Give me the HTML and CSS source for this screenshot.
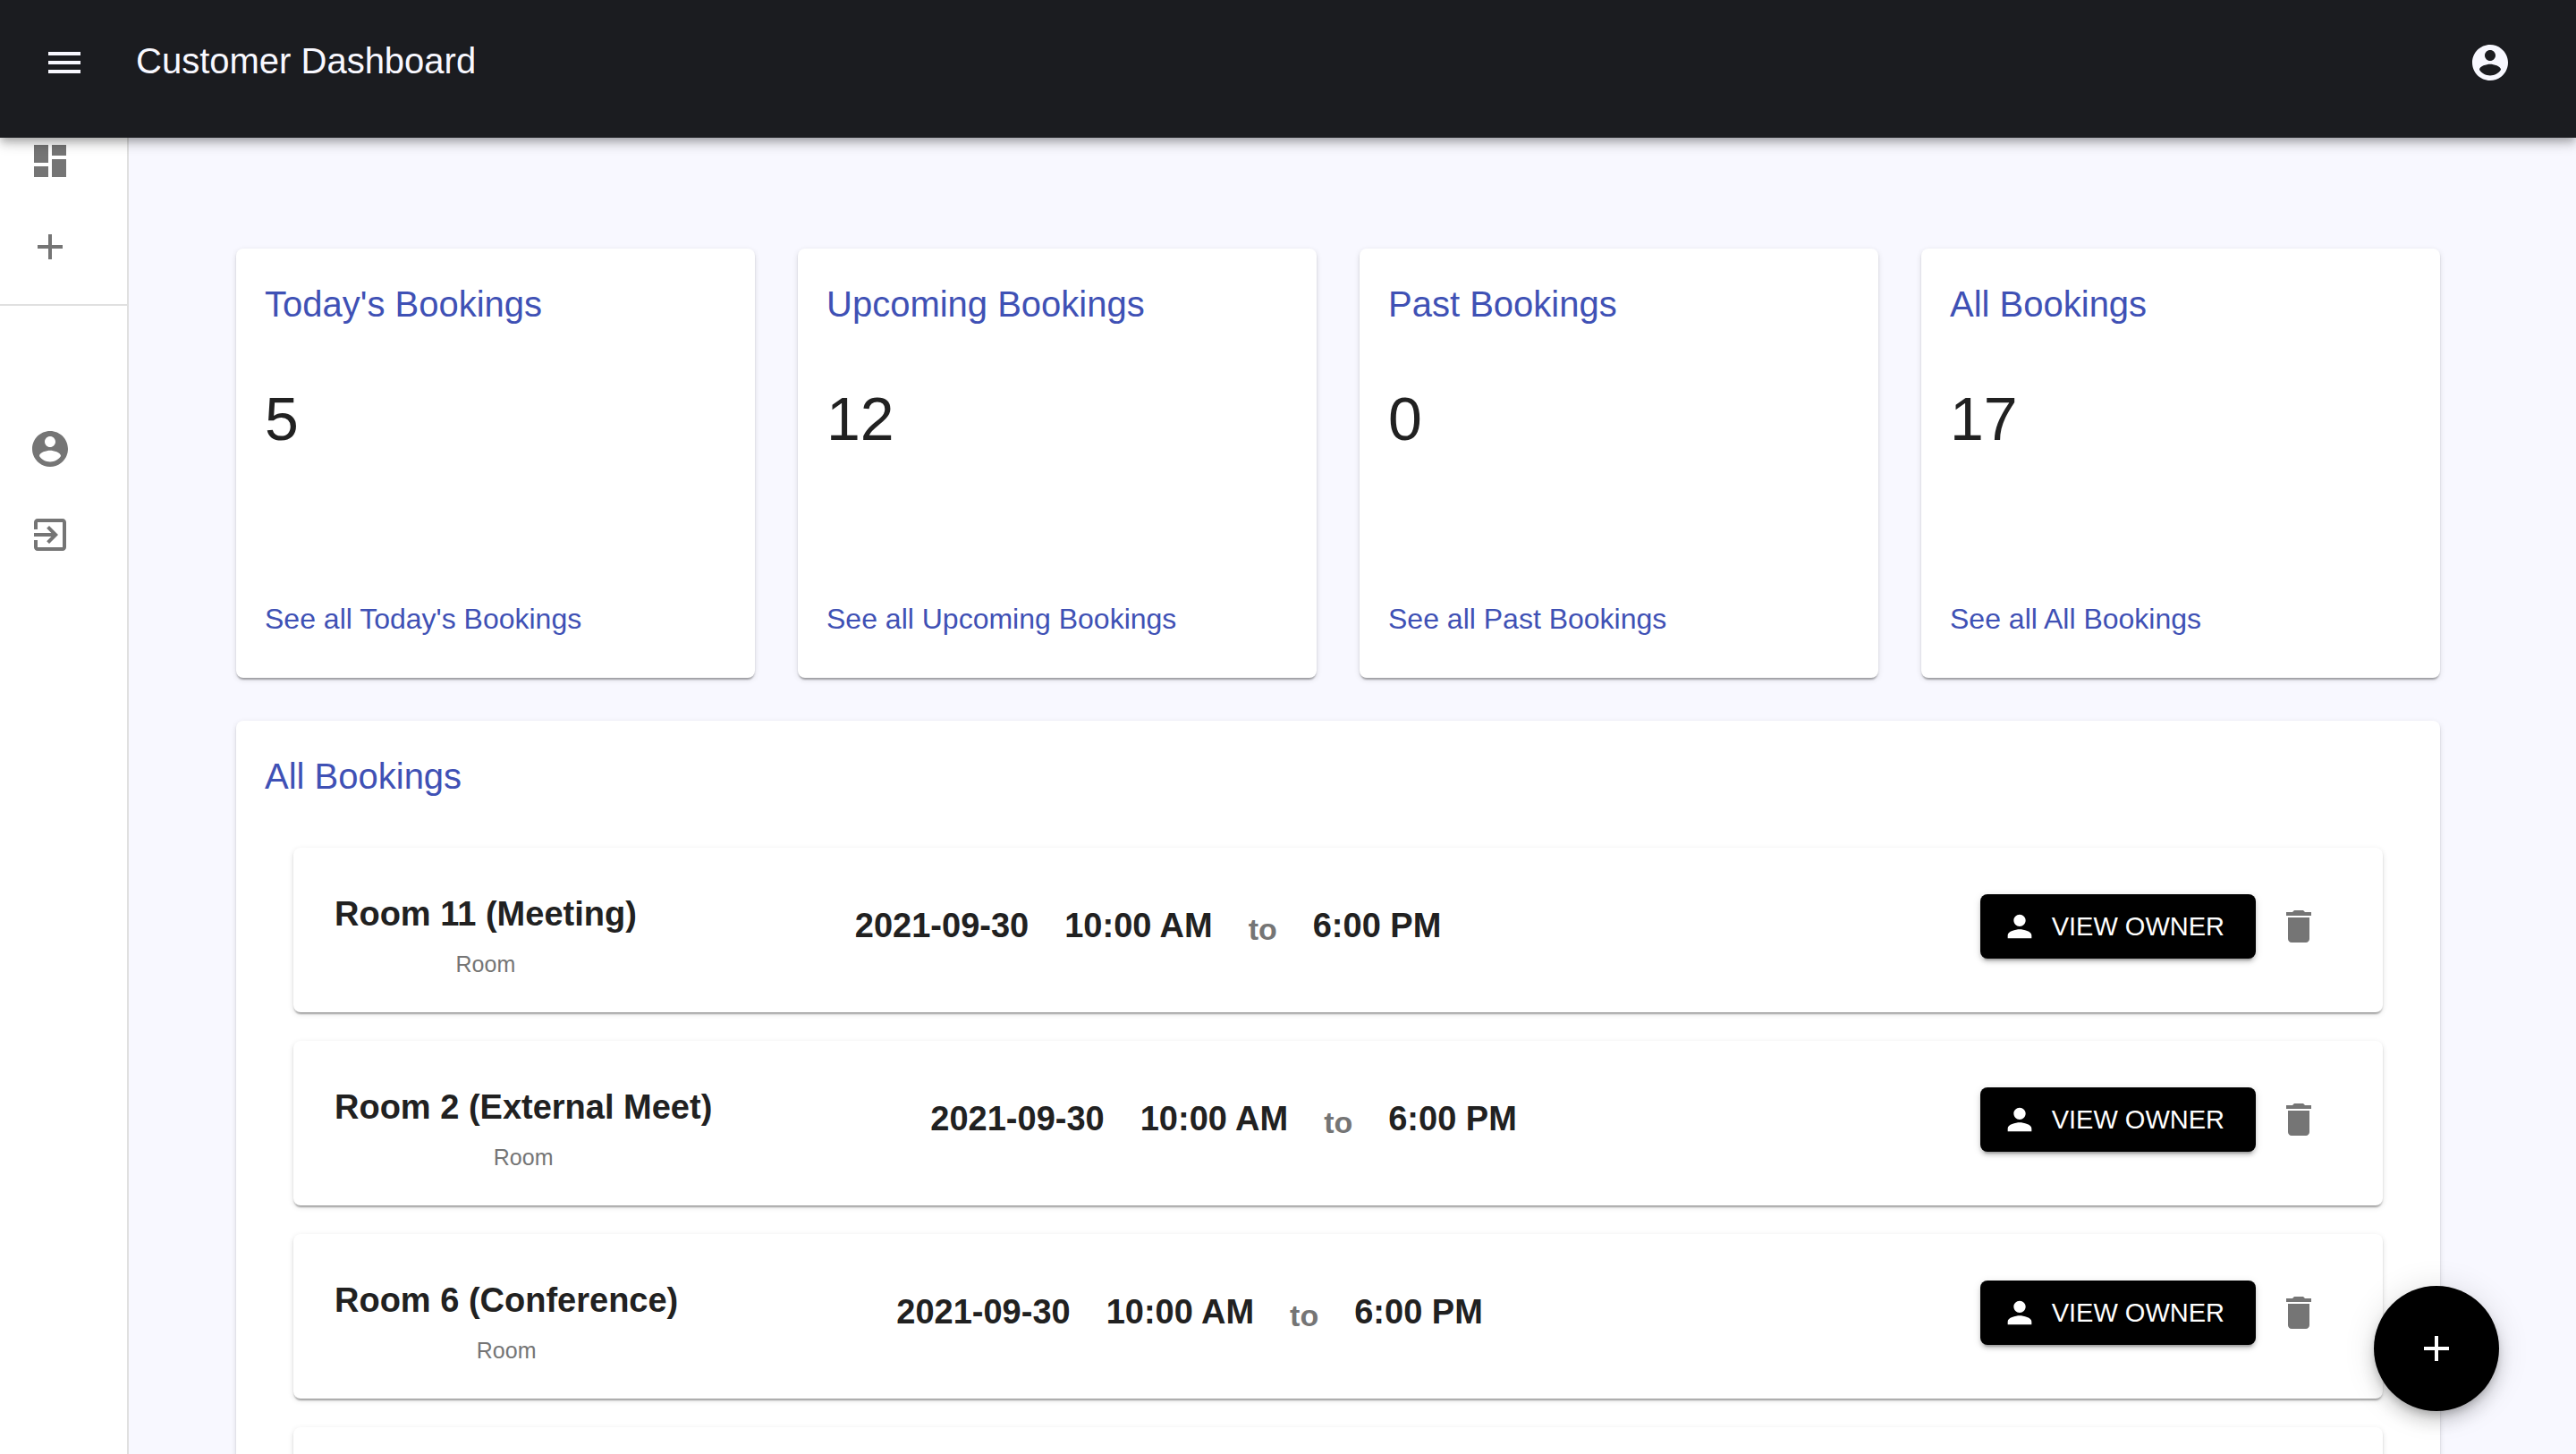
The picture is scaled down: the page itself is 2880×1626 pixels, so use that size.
FILE: index.html
```
<!DOCTYPE html>
<html lang="en">
<head>
<meta charset="utf-8">
<title>Customer Dashboard</title>
<link rel="stylesheet" href="styles.css">
</head>
<body>
<svg class="sprite" aria-hidden="true">
  <symbol id="menu" viewBox="0 0 24 24"><path d="M3 18h18v-2H3v2zm0-5h18v-2H3v2zm0-7v2h18V6H3z"/></symbol>
  <symbol id="account" viewBox="0 0 24 24"><path d="M12 2C6.48 2 2 6.48 2 12s4.480 10 10 10 10-4.480 10-10S17.520 2 12 2zm0 3c1.660 0 3 1.340 3 3s-1.340 3-3 3-3-1.340-3-3 1.340-3 3-3zm0 14.200c-2.500 0-4.710-1.280-6-3.220.030-1.990 4-3.080 6-3.080 1.990 0 5.970 1.090 6 3.080-1.290 1.940-3.500 3.220-6 3.220z"/></symbol>
  <symbol id="dashboard" viewBox="0 0 24 24"><path d="M3 13h8V3H3v10zm0 8h8v-6H3v6zm10 0h8V11h-8v10zm0-18v6h8V3h-8z"/></symbol>
  <symbol id="add" viewBox="0 0 24 24"><path d="M19 13h-6v6h-2v-6H5v-2h6V5h2v6h6v2z"/></symbol>
  <symbol id="exit" viewBox="0 0 24 24"><path d="M10.090 15.590L11.500 17l5-5-5-5-1.410 1.410L12.670 11H3v2h9.670l-2.580 2.590zM19 3H5c-1.110 0-2 .9-2 2v4h2V5h14v14H5v-4H3v4c0 1.100.890 2 2 2h14c1.100 0 2-.9 2-2V5c0-1.100-.9-2-2-2z"/></symbol>
  <symbol id="person" viewBox="0 0 24 24"><path d="M12 12c2.210 0 4-1.790 4-4s-1.790-4-4-4-4 1.790-4 4 1.790 4 4 4zm0 2c-2.670 0-8 1.340-8 4v2h16v-2c0-2.660-5.330-4-8-4z"/></symbol>
  <symbol id="delete" viewBox="0 0 24 24"><path d="M6 19c0 1.100.9 2 2 2h8c1.100 0 2-.9 2-2V7H6v12zM19 4h-3.500l-1-1h-5l-1 1H5v2h14V4z"/></symbol>
</svg>

<header class="app-bar">
  <button class="icon-button" type="button" aria-label="Open menu"><svg class="icon"><use href="#menu"/></svg></button>
  <h1 class="app-title">Customer Dashboard</h1>
  <button class="icon-button" type="button" aria-label="Account"><svg class="icon"><use href="#account"/></svg></button>
</header>

<div class="shell">
  <nav class="sidebar" aria-label="Main">
    <div class="nav-group">
      <a class="nav-item" href="#dashboard" aria-label="Dashboard"><svg class="icon"><use href="#dashboard"/></svg></a>
      <a class="nav-item" href="#add" aria-label="Add booking"><svg class="icon"><use href="#add"/></svg></a>
    </div>
    <div class="nav-group nav-group-user">
      <a class="nav-item" href="#account" aria-label="Profile"><svg class="icon"><use href="#account"/></svg></a>
      <a class="nav-item" href="#exit" aria-label="Log out"><svg class="icon"><use href="#exit"/></svg></a>
    </div>
  </nav>

  <main class="content">
    <div class="container">
      <section class="summary">
        <article class="paper card">
          <h2 class="heading">Today's Bookings</h2>
          <p class="count">5</p>
          <a class="more" href="#today">See all Today's Bookings</a>
        </article>
        <article class="paper card">
          <h2 class="heading">Upcoming Bookings</h2>
          <p class="count">12</p>
          <a class="more" href="#upcoming">See all Upcoming Bookings</a>
        </article>
        <article class="paper card">
          <h2 class="heading">Past Bookings</h2>
          <p class="count">0</p>
          <a class="more" href="#past">See all Past Bookings</a>
        </article>
        <article class="paper card">
          <h2 class="heading">All Bookings</h2>
          <p class="count">17</p>
          <a class="more" href="#all">See all All Bookings</a>
        </article>
      </section>

      <section class="paper panel">
        <h2 class="heading">All Bookings</h2>
        <ul class="bookings">
          <li class="paper booking">
            <div class="room"><h3 class="room-name">Room 11 (Meeting)</h3><p class="room-type">Room</p></div>
            <div class="slot"><span>2021-09-30</span><span>10:00 AM</span><span class="to">to</span><span>6:00 PM</span></div>
            <div class="actions">
              <button class="owner-button" type="button"><svg class="icon-small"><use href="#person"/></svg>VIEW OWNER</button>
              <button class="delete-button" type="button" aria-label="Delete booking"><svg class="icon"><use href="#delete"/></svg></button>
            </div>
          </li>
          <li class="paper booking">
            <div class="room"><h3 class="room-name">Room 2 (External Meet)</h3><p class="room-type">Room</p></div>
            <div class="slot"><span>2021-09-30</span><span>10:00 AM</span><span class="to">to</span><span>6:00 PM</span></div>
            <div class="actions">
              <button class="owner-button" type="button"><svg class="icon-small"><use href="#person"/></svg>VIEW OWNER</button>
              <button class="delete-button" type="button" aria-label="Delete booking"><svg class="icon"><use href="#delete"/></svg></button>
            </div>
          </li>
          <li class="paper booking">
            <div class="room"><h3 class="room-name">Room 6 (Conference)</h3><p class="room-type">Room</p></div>
            <div class="slot"><span>2021-09-30</span><span>10:00 AM</span><span class="to">to</span><span>6:00 PM</span></div>
            <div class="actions">
              <button class="owner-button" type="button"><svg class="icon-small"><use href="#person"/></svg>VIEW OWNER</button>
              <button class="delete-button" type="button" aria-label="Delete booking"><svg class="icon"><use href="#delete"/></svg></button>
            </div>
          </li>
          <li class="paper booking"></li>
        </ul>
      </section>
    </div>
  </main>
</div>

<button class="fab" type="button" aria-label="New booking"><svg class="icon"><use href="#add"/></svg></button>
</body>
</html>
```
FILE: styles.css
```
* {
  box-sizing: border-box;
}

body {
  margin: 0;
  height: 100vh;
  display: flex;
  flex-direction: column;
  background: #f8f8ff;
  color: #212121;
  font-family: "Liberation Sans", Helvetica, Arial, sans-serif;
  font-size: 32px;
}

h1, h2, h3, p, ul {
  margin: 0;
  padding: 0;
  font-weight: 400;
}

button {
  border: 0;
  padding: 0;
  background: none;
  color: inherit;
  font-family: inherit;
  cursor: pointer;
}

a {
  color: inherit;
  text-decoration: none;
}

.sprite {
  position: absolute;
  width: 0;
  height: 0;
}

.icon,
.icon-small {
  display: block;
  flex: none;
  width: 48px;
  height: 48px;
  fill: currentColor;
}

.icon-small {
  width: 40px;
  height: 40px;
}

/* App bar */
.app-bar {
  position: relative;
  z-index: 2;
  flex: none;
  display: flex;
  align-items: center;
  gap: 32px;
  padding: 22px 48px 36px 24px;
  background: #1b1c20;
  color: #f8f8ff;
  box-shadow: 0 4px 8px -2px rgba(0, 0, 0, .2), 0 8px 10px rgba(0, 0, 0, .14), 0 2px 20px rgba(0, 0, 0, .12);
}

.icon-button {
  padding: 24px;
}

.app-title {
  flex: 1;
  padding-bottom: 4px;
  font-size: 40px;
  line-height: 64px;
}

/* Layout */
.shell {
  flex: 1;
  min-height: 0;
  display: flex;
}

.sidebar {
  flex: none;
  width: 144px;
  background: #fff;
  border-right: 2px solid #e0e0e0;
  color: #757575;
}

.nav-group {
  padding-bottom: 16px;
  border-bottom: 2px solid #e0e0e0;
}

/* The first row tucks under the app bar */
.nav-group:first-child {
  margin-top: -22px;
}

.nav-group-user {
  padding-top: 112px;
  border-bottom: 0;
}

.nav-item {
  display: block;
  padding: 24px 32px;
}

.content {
  flex: 1;
  min-width: 0;
  overflow-y: auto;
  scrollbar-width: none;
  padding: 124px 32px 48px 0;
}

.container {
  max-width: 2464px;
  margin: 0 auto;
}

.paper {
  background: #fff;
  border-radius: 8px;
  box-shadow: 0 4px 2px -2px rgba(0, 0, 0, .2), 0 2px 2px rgba(0, 0, 0, .14), 0 2px 6px rgba(0, 0, 0, .12);
}

.heading {
  color: #3f51b5;
  font-size: 40px;
  line-height: 64px;
}

/* Summary cards */
.summary {
  display: grid;
  grid-template-columns: repeat(4, 1fr);
  gap: 48px;
  margin-bottom: 48px;
}

.card {
  display: flex;
  flex-direction: column;
  min-height: 480px;
  padding: 30px 32px 42px;
}

.count {
  flex: 1;
  padding-top: 54px;
  font-size: 68px;
  line-height: 84px;
}

.more {
  color: #3f51b5;
  line-height: 48px;
}

/* Bookings */
.panel {
  padding: 30px 32px 48px;
}

.bookings {
  display: grid;
  gap: 32px;
  padding: 48px 32px 0;
  list-style: none;
}

.booking {
  display: flex;
  align-items: center;
  gap: 244px;
  min-height: 184px;
  padding: 0 46px 8px;
}

.room {
  padding-top: 28px;
  text-align: center;
}

.room-name {
  font-size: 38px;
  font-weight: 700;
  line-height: 56px;
}

.room-type {
  color: #757575;
  font-size: 25px;
  line-height: 56px;
}

.slot {
  display: flex;
  gap: 40px;
  padding-top: 6px;
  font-size: 38px;
  font-weight: 700;
  line-height: 48px;
}

.to {
  color: #757575;
  font-size: 34px;
  line-height: 56px;
}

.actions {
  display: flex;
  align-items: center;
  margin-left: auto;
}

.owner-button {
  display: flex;
  align-items: center;
  gap: 16px;
  height: 72px;
  padding: 0 35px 0 24px;
  border-radius: 8px;
  background: #000;
  color: #fff;
  font-size: 29px;
  box-shadow: 0 6px 2px -4px rgba(0, 0, 0, .2), 0 4px 4px rgba(0, 0, 0, .14), 0 2px 10px rgba(0, 0, 0, .12);
}

.delete-button {
  padding: 24px;
  color: #757575;
}

/* Floating action button */
.fab {
  position: fixed;
  z-index: 3;
  right: 86px;
  bottom: 48px;
  display: grid;
  place-items: center;
  width: 140px;
  height: 140px;
  border-radius: 50%;
  background: #000;
  color: #fff;
  box-shadow: 0 6px 10px -2px rgba(0, 0, 0, .2), 0 12px 20px rgba(0, 0, 0, .14), 0 2px 36px rgba(0, 0, 0, .12);
}
```
